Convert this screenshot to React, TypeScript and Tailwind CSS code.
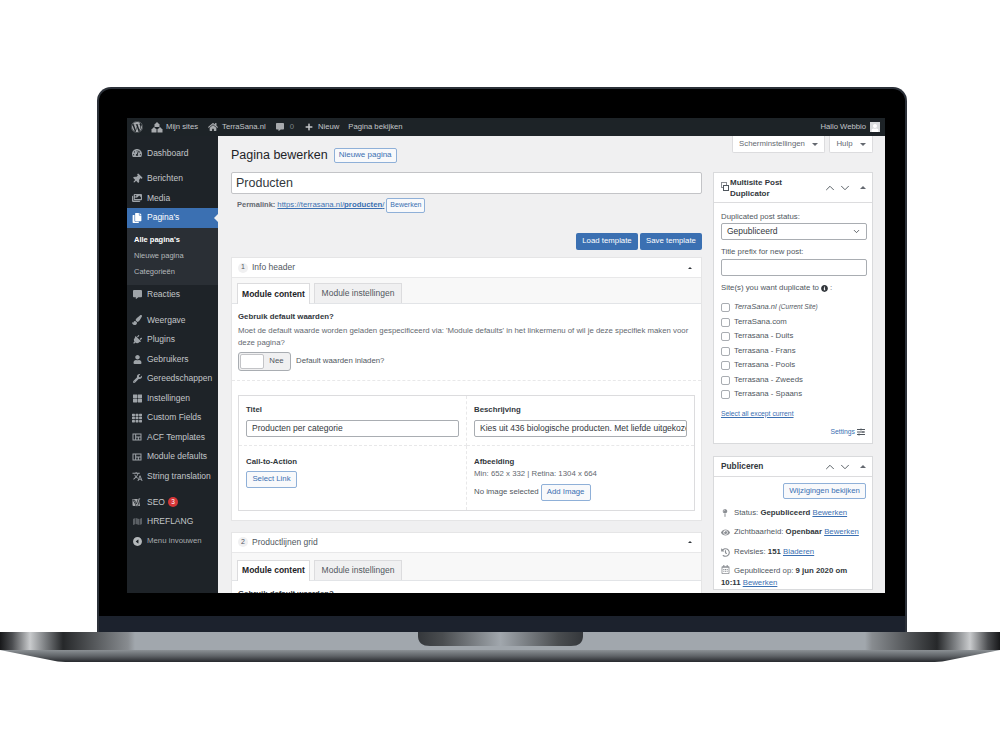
import {
  FaWordpress,
  FaHome,
  FaCommentAlt,
  FaPlus,
  FaTachometerAlt,
  FaThumbtack,
  FaImages,
  FaCopy,
  FaPaintBrush,
  FaPlug,
  FaUser,
  FaWrench,
  FaThLarge,
  FaTh,
  FaMap,
  FaEye,
  FaHistory,
  FaRegCalendarAlt,
  FaSlidersH,
  FaInfoCircle,
  FaMapPin,
} from "react-icons/fa";
import { IoCaretBackCircle } from "react-icons/io5";
import { MdTranslate, MdOutlineViewQuilt } from "react-icons/md";
import { ChevronUp, ChevronDown } from "lucide-react";

const Sites = () => (
  <svg width="12" height="11" viewBox="0 0 24 22" fill="currentColor">
    <path d="M12 0l5 5v5H7V5z" />
    <path d="M6 10l5 5v6H1v-6z" />
    <path d="M18 10l5 5v6H13v-6z" />
  </svg>
);

const Yoast = () => (
  <svg width="11" height="11" viewBox="0 0 22 22">
    <path d="M1 4h13l2 14H3a2 2 0 0 1-2-2z" fill="#a7aaad" />
    <path d="M5 6l4 8 4-12h4l-6 17H7l1-3-6-10z" fill="#a7aaad" stroke="#1e2328" strokeWidth="1.5" />
  </svg>
);

const Caret = ({ className = "" }: { className?: string }) => (
  <span className={`inline-block h-0 w-0 border-x-[3px] border-b-[3px] border-x-transparent border-b-[#646970] ${className}`} />
);

const Down = () => <span className="ml-[7px] inline-block h-0 w-0 border-x-[3px] border-t-[3px] border-x-transparent border-t-[#646970]" />;

const topMenu = [
  { label: "Dashboard", icon: <FaTachometerAlt size={10} />, mt: "mt-[7.5px]" },
  { label: "Berichten", icon: <FaThumbtack size={10} className="rotate-45" />, mt: "mt-[6px]" },
  { label: "Media", icon: <FaImages size={10} />, mt: "" },
];

const midMenu = [
  { label: "Weergave", icon: <FaPaintBrush size={10} />, mt: "mt-[6.5px]" },
  { label: "Plugins", icon: <FaPlug size={10} className="rotate-45" />, mt: "" },
  { label: "Gebruikers", icon: <FaUser size={9} />, mt: "" },
  { label: "Gereedschappen", icon: <FaWrench size={9} />, mt: "" },
  { label: "Instellingen", icon: <FaThLarge size={9} />, mt: "" },
  { label: "Custom Fields", icon: <FaTh size={10} />, mt: "" },
  { label: "ACF Templates", icon: <MdOutlineViewQuilt size={12} />, mt: "" },
  { label: "Module defaults", icon: <MdOutlineViewQuilt size={12} />, mt: "" },
  { label: "String translation", icon: <MdTranslate size={11} />, mt: "" },
];

const MenuRow = ({ label, icon, mt = "" }: { label: string; icon: React.ReactNode; mt?: string }) => (
  <div className={`flex h-[19.5px] items-center text-[#c3c6c9] ${mt}`}>
    <span className="flex w-[20px] shrink-0 justify-center text-[#9ea3a8]">{icon}</span>
    <span>{label}</span>
  </div>
);

const Sidebar = () => (
  <div className="w-[91px] shrink-0 bg-[#1e2328] text-[8.5px]">
    {topMenu.map((m) => (
      <MenuRow key={m.label} {...m} />
    ))}
    <div className="relative flex h-[19.5px] items-center bg-[#3b70b2] text-white">
      <span className="flex w-[20px] shrink-0 justify-center">
        <FaCopy size={10} />
      </span>
      <span>Pagina's</span>
      <span className="absolute top-[6px] right-0 h-0 w-0 border-y-[4px] border-r-[4px] border-y-transparent border-r-[#f0f0f1]" />
    </div>
    <div className="h-[57px] bg-[#2a2f35] pt-[4.5px] pl-[7px] text-[7.5px] text-[#b4b8bb]">
      <div className="flex h-[16px] items-center font-bold text-white">Alle pagina's</div>
      <div className="flex h-[16px] items-center">Nieuwe pagina</div>
      <div className="flex h-[16px] items-center">Categorieën</div>
    </div>
    <MenuRow label="Reacties" icon={<FaCommentAlt size={9} />} />
    {midMenu.map((m) => (
      <MenuRow key={m.label} {...m} />
    ))}
    <div className="mt-[6.5px] flex h-[19.5px] items-center text-[#c3c6c9]">
      <span className="flex w-[20px] shrink-0 justify-center">
        <Yoast />
      </span>
      <span>SEO</span>
      <span className="ml-[3px] flex h-[10px] w-[10px] items-center justify-center rounded-full bg-[#d63638] text-[6.5px] text-white">3</span>
    </div>
    <MenuRow label="HREFLANG" icon={<FaMap size={9} className="text-[#5a5f64]" />} />
    <div className="flex h-[19.5px] items-center text-[7.8px] text-[#a7aaad]">
      <span className="flex w-[20px] shrink-0 justify-center text-[#b4b8bb]">
        <IoCaretBackCircle size={11} />
      </span>
      <span>Menu invouwen</span>
    </div>
  </div>
);

const TopBar = () => (
  <div className="flex h-[18px] shrink-0 items-center bg-[#1d2327] pr-[5px] pl-[4px] text-[7.7px] text-[#c3c6c9]">
    <FaWordpress size={12} className="text-[#a7aaad]" />
    <span className="ml-[8px] text-[#a7aaad]">
      <Sites />
    </span>
    <span className="ml-[3px]">Mijn sites</span>
    <FaHome size={10} className="ml-[10px] text-[#a7aaad]" />
    <span className="ml-[4px]">TerraSana.nl</span>
    <FaCommentAlt size={8} className="ml-[10px] text-[#a7aaad]" />
    <span className="ml-[6px] text-[#7d8388]">0</span>
    <FaPlus size={8} className="ml-[11px] text-[#c3c6c9]" />
    <span className="ml-[5px]">Nieuw</span>
    <span className="ml-[9px]">Pagina bekijken</span>
    <span className="ml-auto">Hallo Webbio</span>
    <span className="ml-[4px] flex h-[10px] w-[10px] items-end justify-center overflow-hidden bg-[#d9dbdd] text-white">
      <FaUser size={8} />
    </span>
  </div>
);

const OutlineBtn = ({ children, className = "" }: { children: React.ReactNode; className?: string }) => (
  <span className={`inline-flex items-center justify-center rounded-[2px] border border-[#8fb0d8] bg-[#f8f9fb] text-[#3b70b2] ${className}`}>{children}</span>
);

const Input = ({ value, className = "" }: { value: string; className?: string }) => (
  <div className={`flex h-[17px] items-center overflow-hidden rounded-[2px] border border-[#a9adb2] bg-white px-[5px] text-[8.5px] whitespace-nowrap text-[#32373c] ${className}`}>{value}</div>
);

const Tabs = ({ height = "h-[26px]" }: { height?: string }) => (
  <div className={`flex items-end gap-[4px] border-b border-[#e2e4e7] bg-[#f8f8f8] pl-[5px] text-[8.5px] ${height}`}>
    <div className="-mb-px flex h-[21px] w-[73px] items-center justify-center border border-b-0 border-[#dcdcde] bg-white font-bold text-[#1d2327]">Module content</div>
    <div className="flex h-[20px] w-[88px] items-center justify-center border border-b-0 border-[#dcdcde] bg-[#f0f0f1] text-[#50575e]">Module instellingen</div>
  </div>
);

const BoxHeader = ({ n, title }: { n: number; title: string }) => (
  <div className="flex h-[20px] items-center border-b border-[#e8e8e9] pr-[9px] pl-[6px] text-[8.5px] text-[#50575e]">
    <span className="flex h-[10px] w-[10px] items-center justify-center rounded-full bg-[#f0f0f1] text-[7px]">{n}</span>
    <span className="ml-[4px]">{title}</span>
    <span className="ml-auto h-0 w-0 border-x-[2px] border-b-[2px] border-x-transparent border-b-[#32373c]" />
  </div>
);

const InfoHeader = () => (
  <div className="border border-[#e5e5e6] bg-white">
    <BoxHeader n={1} title="Info header" />
    <Tabs />
    <div className="px-[6px] pt-[6.5px]">
      <div className="font-bold text-[#32373c]">Gebruik default waarden?</div>
      <div className="mt-[1.5px] leading-[12px] text-[#646970]">
        Moet de default waarde worden geladen gespecificeerd via: 'Module defaults' in het linkermenu of wil je deze specifiek maken voor deze pagina?
      </div>
      <div className="mt-[3px] flex items-center">
        <div className="flex h-[19px] w-[53px] items-center rounded-[3px] border border-[#a9adb2] bg-[#f0f0f1] p-[1px]">
          <span className="h-full w-[24px] rounded-[2px] border border-[#c3c4c7] bg-white" />
          <span className="flex-1 text-center text-[#50575e]">Nee</span>
        </div>
        <span className="ml-[5px] text-[#50575e]">Default waarden inladen?</span>
      </div>
    </div>
    <div className="mt-[9px] border-t border-dashed border-[#e8e8e9]" />
    <div className="mx-[6px] mt-[14px] mb-[9px] grid h-[116px] grid-cols-[228px_minmax(0,1fr)] grid-rows-[50px_1fr] border border-[#dcdcde]">
      <div className="border-r border-b border-dashed border-[#e8e8e9] px-[7px] pt-[8px]">
        <div className="font-bold text-[#32373c]">Titel</div>
        <Input value="Producten per categorie" className="mt-[3px]" />
      </div>
      <div className="border-b border-dashed border-[#e8e8e9] px-[7px] pt-[8px]">
        <div className="font-bold text-[#32373c]">Beschrijving</div>
        <Input value="Kies uit 436 biologische producten. Met liefde uitgekozen" className="mt-[3px]" />
      </div>
      <div className="border-r border-dashed border-[#e8e8e9] px-[7px] pt-[10px]">
        <div className="font-bold text-[#32373c]">Call-to-Action</div>
        <OutlineBtn className="mt-[2px] h-[17px] w-[51px]">Select Link</OutlineBtn>
      </div>
      <div className="px-[7px] pt-[10px]">
        <div className="font-bold text-[#32373c]">Afbeelding</div>
        <div className="-mt-[1px] text-[#646970]">Min: 652 x 332 | Retina: 1304 x 664</div>
        <div className="mt-[4px] flex items-center text-[#50575e]">
          No image selected
          <OutlineBtn className="ml-[2px] h-[17px] w-[50px]">Add Image</OutlineBtn>
        </div>
      </div>
    </div>
  </div>
);

const SecondBox = () => (
  <div className="mt-[11px] border border-[#e5e5e6] bg-white">
    <BoxHeader n={2} title="Productlijnen grid" />
    <Tabs height="h-[28px]" />
    <div className="px-[6px] pt-[7px] font-bold text-[#32373c]">Gebruik default waarden?</div>
  </div>
);

const BoxControls = () => (
  <div className="ml-auto flex items-center text-[#50575e]">
    <ChevronUp size={14} strokeWidth={1.6} />
    <ChevronDown size={14} strokeWidth={1.6} className="ml-[1px]" />
    <Caret className="mr-[6px] ml-[8px]" />
  </div>
);

const sites = ["TerraSana.com", "Terrasana - Duits", "Terrasana - Frans", "Terrasana - Pools", "Terrasana - Zweeds", "Terrasana - Spaans"];

const Check = () => <span className="h-[9px] w-[9px] shrink-0 rounded-[2px] border border-[#a9adb2] bg-white" />;

const Duplicator = () => (
  <div className="border border-[#d9dadc] bg-white">
    <div className="flex h-[30px] items-center border-b border-[#dcdcde] pl-[7px]">
      <span className="relative mr-[1px] h-[11px] w-[8px] shrink-0">
        <span className="absolute top-0 left-0 h-[6px] w-[6px] border border-[#8c8f94]" />
        <span className="absolute top-[3px] left-[2px] h-[6px] w-[6px] border border-[#50575e] bg-white" />
      </span>
      <span className="w-[80px] text-[8px] leading-[11px] font-bold text-[#32373c]">Multisite Post Duplicator</span>
      <BoxControls />
    </div>
    <div className="h-[240px] px-[7px] pt-[7.5px] text-[#50575e]">
      <div>Duplicated post status:</div>
      <div className="flex h-[17px] w-[146px] items-center justify-between rounded-[2px] border border-[#a9adb2] px-[5px] text-[8.5px] text-[#32373c]">
        Gepubliceerd
        <ChevronDown size={9} strokeWidth={2} />
      </div>
      <div className="mt-[6px]">Title prefix for new post:</div>
      <Input value="" className="w-[146px]" />
      <div className="mt-[6px] flex items-center">
        Site(s) you want duplicate to
        <FaInfoCircle size={7} className="mx-[2px] text-[#32373c]" />:
      </div>
      <div className="mt-[5.5px] flex h-[14.5px] items-center">
        <Check />
        <span className="ml-[4px] text-[7.5px] italic">TerraSana.nl</span>
        <span className="ml-[2px] text-[6.5px] italic">(Current Site)</span>
      </div>
      {sites.map((s) => (
        <div key={s} className="flex h-[14.5px] items-center">
          <Check />
          <span className="ml-[4px]">{s}</span>
        </div>
      ))}
      <div className="mt-[7px] text-[6.8px] leading-[10px] text-[#3b70b2] underline">Select all except current</div>
      <div className="mt-[8px] flex items-center justify-end text-[6.8px] leading-[10px] text-[#3b70b2]">
        Settings
        <FaSlidersH size={8} className="ml-[2px] text-[#50575e]" />
      </div>
    </div>
  </div>
);

const Edit = ({ children = "Bewerken" }: { children?: string }) => <span className="text-[#3b70b2] underline">{children}</span>;

const StatusRow = ({ icon, children }: { icon: React.ReactNode; children: React.ReactNode }) => (
  <div className="flex h-[19.5px] items-center">
    <span className="w-[13px] shrink-0 text-[#8c8f94]">{icon}</span>
    <span className="whitespace-nowrap">{children}</span>
  </div>
);

const Publish = () => (
  <div className="mt-[12px] border border-[#d9dadc] bg-white text-[#50575e]">
    <div className="flex h-[20px] items-center border-b border-[#dcdcde] pl-[7px]">
      <span className="text-[8.3px] font-bold text-[#32373c]">Publiceren</span>
      <BoxControls />
    </div>
    <div className="px-[7px] pt-[6px]">
      <div className="-mr-px flex justify-end">
        <OutlineBtn className="h-[16px] w-[83px]">Wijzigingen bekijken</OutlineBtn>
      </div>
      <div className="mt-[4.5px]">
        <StatusRow icon={<FaMapPin size={8} />}>
          Status: <b className="text-[#32373c]">Gepubliceerd</b> <Edit />
        </StatusRow>
        <StatusRow icon={<FaEye size={9} />}>
          Zichtbaarheid: <b className="text-[#32373c]">Openbaar</b> <Edit />
        </StatusRow>
        <StatusRow icon={<FaHistory size={9} />}>
          Revisies: <b className="text-[#32373c]">151</b> <Edit>Bladeren</Edit>
        </StatusRow>
      </div>
      <div className="mt-[3px] leading-[12px]">
        <FaRegCalendarAlt size={9} className="mr-[4px] inline align-[-1px] text-[#8c8f94]" />
        Gepubliceerd op: <b className="text-[#32373c]">9 jun 2020 om 10:11</b> <Edit />
      </div>
    </div>
  </div>
);

const Content = () => (
  <div className="min-w-0 flex-1 overflow-hidden bg-[#f0f0f1] pl-[13px] text-[7.8px] leading-[12.75px]">
    <div className="flex justify-end pr-[12px]">
      <div className="flex h-[17px] w-[93px] items-center justify-center rounded-b-[2px] border border-t-0 border-[#dcdcde] bg-white text-[#646970]">
        Scherminstellingen
        <Down />
      </div>
      <div className="ml-[4px] flex h-[17px] w-[44px] items-center justify-center rounded-b-[2px] border border-t-0 border-[#dcdcde] bg-white text-[#646970]">
        Hulp
        <Down />
      </div>
    </div>
    <div className="flex gap-[11px]">
      <div className="w-[471px] shrink-0">
        <div className="-mt-[5px] flex h-[15px] items-center">
          <span className="text-[12.5px] text-[#1d2327]">Pagina bewerken</span>
          <OutlineBtn className="ml-[6px] h-[15px] w-[63px] text-[8px]">Nieuwe pagina</OutlineBtn>
        </div>
        <div className="mt-[9px] flex h-[22px] items-center rounded-[2px] border border-[#c3c4c7] bg-white px-[4px] text-[12.5px] text-[#32373c]">Producten</div>
        <div className="mt-[4px] flex h-[15px] items-center pl-[6px]">
          <span className="text-[7.5px] font-bold text-[#646970]">Permalink:</span>
          <span className="ml-[2px] text-[#3b70b2] underline">
            https://terrasana.nl/<b>producten</b>/
          </span>
          <OutlineBtn className="ml-[2px] h-[15px] w-[39px] text-[7px]">Bewerken</OutlineBtn>
        </div>
        <div className="mt-[20px] mb-[7px] flex justify-end gap-[2px]">
          <span className="flex h-[17px] w-[62px] items-center justify-center rounded-[2px] bg-[#3b70b2] text-white">Load template</span>
          <span className="flex h-[17px] w-[62px] items-center justify-center rounded-[2px] bg-[#3b70b2] text-white">Save template</span>
        </div>
        <InfoHeader />
        <SecondBox />
      </div>
      <div className="mt-[19px] w-[160px] shrink-0">
        <Duplicator />
        <Publish />
      </div>
    </div>
  </div>
);

const LaptopBase = () => (
  <div className="relative h-[30px] w-[1000px] shrink-0">
    <svg width="1000" height="30" viewBox="0 0 1000 30" className="block">
      <defs>
        <linearGradient id="metal" x1="0" x2="1" y1="0" y2="0">
          <stop offset="0" stopColor="#17181a" />
          <stop offset="0.012" stopColor="#4a4c4f" />
          <stop offset="0.03" stopColor="#c9cbcd" />
          <stop offset="0.045" stopColor="#7d8083" />
          <stop offset="0.063" stopColor="#26282a" />
          <stop offset="0.128" stopColor="#888c90" />
          <stop offset="0.135" stopColor="#a1a7ad" />
          <stop offset="0.865" stopColor="#a1a7ad" />
          <stop offset="0.872" stopColor="#888c90" />
          <stop offset="0.937" stopColor="#26282a" />
          <stop offset="0.955" stopColor="#7d8083" />
          <stop offset="0.97" stopColor="#c9cbcd" />
          <stop offset="0.988" stopColor="#4a4c4f" />
          <stop offset="1" stopColor="#17181a" />
        </linearGradient>
        <linearGradient id="lip" x1="0" x2="0" y1="0" y2="1">
          <stop offset="0" stopColor="#8b9094" />
          <stop offset="0.5" stopColor="#5f6367" />
          <stop offset="1" stopColor="#26292d" />
        </linearGradient>
        <linearGradient id="notch" x1="0" x2="1" y1="0" y2="0">
          <stop offset="0" stopColor="#34373b" />
          <stop offset="0.15" stopColor="#4a4d50" />
          <stop offset="0.5" stopColor="#a1a7ad" />
          <stop offset="0.85" stopColor="#4a4d50" />
          <stop offset="1" stopColor="#34373b" />
        </linearGradient>
      </defs>
      <rect width="1000" height="18" fill="url(#metal)" />
      <path d="M0 18H1000L945 29Q940 30 930 30H70Q60 30 55 29Z" fill="url(#lip)" />
      <path d="M418 0H583V4Q583 14 571 14H430Q418 14 418 4Z" fill="url(#notch)" />
    </svg>
  </div>
);

export default function App() {
  return (
    <div className="flex h-[750px] w-[1000px] flex-col overflow-hidden bg-white pt-[87px] font-['Liberation_Sans',Arial,sans-serif]">
      <div className="ml-[97px] flex h-[545px] w-[810px] shrink-0 flex-col rounded-t-[14px] border-x-2 border-t-2 border-[#2c3139] bg-black">
        <div className="mt-[29px] mr-[20px] ml-[28px] flex h-[475px] shrink-0 flex-col overflow-hidden bg-[#f0f0f1]">
          <TopBar />
          <div className="flex min-h-0 flex-1">
            <Sidebar />
            <Content />
          </div>
        </div>
        <div className="mt-[23px] flex-1 bg-[#1c222d]" />
      </div>
      <LaptopBase />
    </div>
  );
}
